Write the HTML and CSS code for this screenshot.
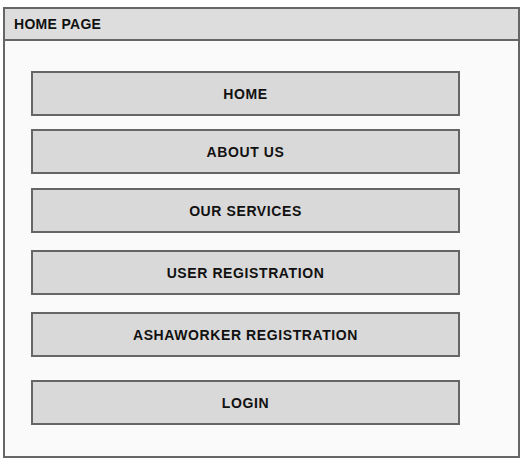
FILE: index.html
```html
<!DOCTYPE html>
<html>
<head>
  <title>Home Page</title>
  <link rel="stylesheet" href="styles.css">
</head>
<body>
  <div class="frame">
    <div class="frame-title">HOME PAGE</div>
    <div class="menu">
      <div class="menu-item">HOME</div>
      <div class="menu-item">ABOUT US</div>
      <div class="menu-item">OUR SERVICES</div>
      <div class="menu-item">USER REGISTRATION</div>
      <div class="menu-item">ASHAWORKER REGISTRATION</div>
      <div class="menu-item">LOGIN</div>
    </div>
  </div>
</body>
</html>
```

FILE: styles.css
```css
body {
  margin: 0;
  background-color: #ffffff;
  font-family: 'Liberation Sans', Arial, sans-serif;
}

.frame {
  box-sizing: border-box;
  width: 517px;
  height: 451px;
  margin: 7px 0 0 3px;
  border: 2px solid #666666;
  background-color: #fafafa;
}

.frame-title {
  box-sizing: border-box;
  height: 32px;
  padding-left: 9px;
  border-bottom: 2px solid #666666;
  background-color: #dddddd;
  color: #111111;
  font-size: 14px;
  font-weight: bold;
  letter-spacing: 0.3px;
  line-height: 30px;
}

.menu {
  display: flex;
  flex-direction: column;
  padding: 30px 0 0 26px;
}

.menu-item {
  box-sizing: border-box;
  width: 429px;
  height: 45px;
  border: 2px solid #666666;
  background-color: #d9d9d9;
  color: #111111;
  font-size: 14px;
  font-weight: bold;
  letter-spacing: 0.6px;
  display: flex;
  justify-content: center;
  align-items: center;
}

.menu-item:nth-child(2) { margin-top: 13px; }
.menu-item:nth-child(3) { margin-top: 14px; }
.menu-item:nth-child(4) { margin-top: 17px; }
.menu-item:nth-child(5) { margin-top: 17px; }
.menu-item:nth-child(6) { margin-top: 23px; }
```
